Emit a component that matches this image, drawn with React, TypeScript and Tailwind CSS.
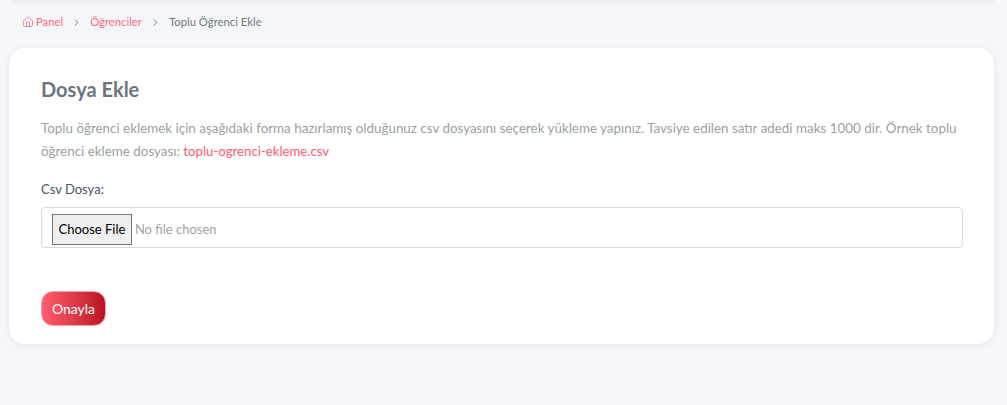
import { Home, ChevronRight } from 'lucide-react';

export default function App() {
    return (
        <div className="h-[405px] w-full overflow-hidden bg-[#f5f6fa] font-['Lato','Open_Sans',sans-serif]">
            {/* Top bar edge */}
            <div className="ml-[13px] mr-[13px] h-[1px] rounded-b-lg bg-[#eeeeee] shadow-[0_1px_4px_rgba(0,0,0,0.16)]" />

            {/* Breadcrumb */}
            <nav className="flex h-[47px] items-center pb-[5px] pl-[22px] text-[11.3px]">
                <a className="flex items-center gap-[2px] text-[#ff6a80]">
                    <Home className="h-[12px] w-[12px]" strokeWidth={1.5} />
                    Panel
                </a>
                <ChevronRight className="mx-[8px] h-[11px] w-[11px] text-[#6c757d]" strokeWidth={2} />
                <a className="text-[#ff6a80]">Öğrenciler</a>
                <ChevronRight className="mx-[8px] h-[11px] w-[11px] text-[#6c757d]" strokeWidth={2} />
                <span className="text-[#6f7a82]">Toplu Öğrenci Ekle</span>
            </nav>

            {/* Card */}
            <div className="ml-[9px] mr-[13px] h-[296px] rounded-2xl bg-white pl-[32px] pr-[31px] pt-[28px] shadow-[0_1px_6px_rgba(0,0,0,0.07)]">
                <h2 className="text-[20px] font-bold leading-[26px] text-[#6c757d]">Dosya Ekle</h2>
                <p className="mt-[15px] text-[13.4px] leading-[23px] text-[#9a9fa3]">
                    Toplu öğrenci eklemek için aşağıdaki forma hazırlamış olduğunuz csv dosyasını seçerek yükleme yapınız. Tavsiye edilen satır adedi maks 1000 dir. Örnek toplu öğrenci ekleme dosyası:{' '}
                    <a className="text-[13.2px] text-[#ff5c75]">toplu-ogrenci-ekleme.csv</a>
                </p>

                <label className="mt-[16px] block text-[13px] leading-[20px] text-[#4b5563]">Csv Dosya:</label>
                <input
                    type="file"
                    className="mt-[8px] block h-[41px] w-full rounded border border-[#d9d9d9] px-[10px] py-[6px] text-[13px] text-[#a3a3a3] file:mr-[3px] file:h-[31px] file:border file:border-solid file:border-[#767676] file:bg-[#efefef] file:px-[5.5px] file:text-black"
                />

                <button className="mt-[43px] block h-[35px] w-[65px] rounded-[12px] border border-[#f6a5ae] bg-gradient-to-r from-[#ff5c6e] to-[#bb0f24] text-[14px] text-white">
                    Onayla
                </button>
            </div>
        </div>
    );
}
